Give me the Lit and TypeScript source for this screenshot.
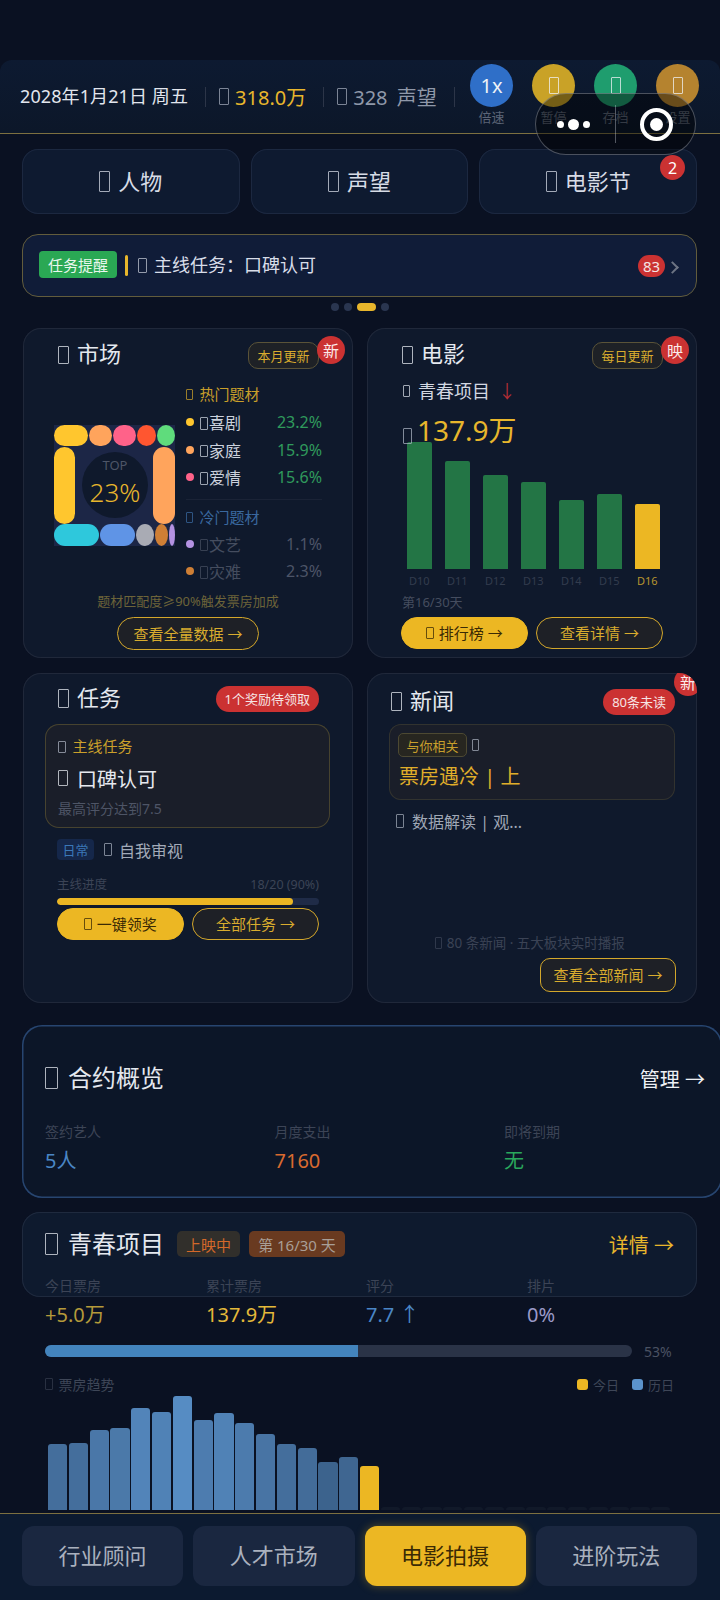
import { LitElement, html, css } from "lit";
import { customElement } from "lit/decorators.js";

const tofu = (cls = "") => html`<span class="t ${cls}"></span>`;

@customElement("app-root")
export class AppRoot extends LitElement {
  static styles = css`
    :host { display: block; width: 720px; height: 1600px; font-family: "Noto Sans", "Noto Sans CJK SC", sans-serif; color: #d8dde8; }
    * { box-sizing: border-box; }
    .root { position: relative; width: 720px; height: 1600px; overflow: hidden; background: #0a1122; display: flex; flex-direction: column; }
    .t { display: inline-block; width: .5em; height: .84em; border: 1.5px solid currentColor; opacity: .75; border-radius: 1px; vertical-align: -.1em; flex: none; }
    .tab, .title, .stxt, .nb, .lh, .lr, .tl1, .date { padding-bottom: .16em; }
    .tab .t, .title .t, .nb .t, .lh .t, .lr .t, .tl1 .t { margin-top: .16em; }
    .header { margin-top: 60px; height: 74px; flex: none; background: linear-gradient(#0d1a31, #0c1729); border-bottom: 1.5px solid #7d7040; display: flex; align-items: center; padding: 0 21px 0 20px; border-radius: 12px 12px 0 0; }
    .date { font-size: 18px; color: #e2e6ee; white-space: nowrap; letter-spacing: .1px; }
    .sep { width: 1px; height: 20px; background: #2c3548; margin: 0 13px 0 17px; flex: none; }
    .money, .rep { font-size: 20px; white-space: nowrap; display: flex; align-items: center; gap: 6px; }
    .money { color: #e8b62c; }
    .money .t, .rep .t { color: #a0a8b8; }
    .rep { color: #8f98a9; word-spacing: 4px; }
    .ctrls { margin-left: auto; display: flex; gap: 19px; align-self: flex-start; flex: none; }
    .ctrl { width: 43px; display: flex; flex-direction: column; align-items: center; font-size: 13px; line-height: 20px; color: #5b6476; white-space: nowrap; }
    .circle { width: 43px; height: 43px; border-radius: 50%; display: flex; align-items: center; justify-content: center; font-size: 20px; color: #f0f2f6; margin-top: 4px; }
    .capsule { position: absolute; left: 535px; top: 93px; width: 161px; height: 62px; border-radius: 31px; background: rgba(0,0,0,.42); border: 1.5px solid rgba(170,175,185,.42); }
    .capsule i { position: absolute; background: #fff; border-radius: 50%; }
    .capsule .d1 { left: 21px; top: 27px; width: 7px; height: 7px; }
    .capsule .d2 { left: 32px; top: 25px; width: 11px; height: 11px; }
    .capsule .d3 { left: 47px; top: 27px; width: 7px; height: 7px; }
    .capsule .div { position: absolute; left: 79px; top: 11px; width: 1px; height: 38px; background: rgba(200,205,215,.4); }
    .capsule .ring { position: absolute; left: 104px; top: 14px; width: 33px; height: 33px; border: 4px solid #fff; border-radius: 50%; display: flex; align-items: center; justify-content: center; }
    .capsule .ring b { width: 13px; height: 13px; background: #fff; border-radius: 50%; }
    .main { flex: 1; overflow: hidden; min-height: 0; }
    .tabs { display: flex; gap: 11px; margin: 15px 23px 0 22px; }
    .tab { position: relative; flex: 1; height: 65px; border-radius: 16px; background: #0e1a30; box-shadow: inset 0 0 0 1px #1c2840; font-size: 22px; display: flex; align-items: center; justify-content: center; gap: 8px; color: #d6dbe5; }
    .tab .t { height: .92em; }
    .tab .num { position: absolute; right: 12px; top: 6px; padding: 0; }
    .dotb { width: 25px; height: 25px; border-radius: 50%; background: #cb3232; color: #fff; font-size: 16px; display: flex; align-items: center; justify-content: center; }
    .strip { margin: 20px 23px 0 22px; height: 63px; border-radius: 16px; border: 1.5px solid #625c3c; background: #101c38; display: flex; align-items: center; padding: 0 14px 0 16px; }
    .green { width: 78px; height: 27px; border-radius: 4px; background: #2aa854; color: #e9f7ee; font-size: 15px; display: flex; align-items: center; justify-content: center; flex: none; margin-bottom: 2px; padding-bottom: 1px; }
    .gbar { width: 3px; height: 21px; background: #e8b62c; border-radius: 2px; margin: 0 10px 0 8px; flex: none; }
    .stxt { font-size: 18px; color: #d8dde8; margin-left: 7px; }
    .strip .t { color: #c0c6d2; font-size: 18px; }
    .count { margin-left: auto; min-width: 27px; height: 22px; border-radius: 11px; background: #cb3232; color: #f4e4e4; font-size: 15px; display: flex; align-items: center; justify-content: center; }
    .chev { width: 9px; height: 9px; margin: 3px 5px 0 3px; border-top: 2px solid #6d7483; border-right: 2px solid #6d7483; transform: rotate(45deg); }
    .pager { display: flex; justify-content: center; align-items: center; gap: 5px; height: 8px; margin-top: 6px; }
    .pager i { width: 8px; height: 8px; border-radius: 4px; background: #2a3650; }
    .pager .on { width: 19px; background: #e8b62c; }
    .grid { display: grid; grid-template-columns: 330px 330px; gap: 15px 14px; margin: 17px 0 0 23px; }
    .card { position: relative; height: 330px; border-radius: 18px; background: #0f192c; box-shadow: inset 0 0 0 1px #20283a; display: flex; flex-direction: column; }
    .head { height: 54px; flex: none; display: flex; align-items: center; justify-content: space-between; padding: 0 34px 0 35px; }
    .title { font-size: 22px; line-height: 30px; color: #e4e8ef; display: flex; align-items: center; gap: 8px; white-space: nowrap; }
    .upd { width: 71px; height: 27px; border-radius: 10px; border: 1px solid #5a5338; background: #1e2126; color: #d9ac2e; font-size: 13px; display: flex; align-items: center; justify-content: center; white-space: nowrap; }
    .corner { position: absolute; width: 28px; height: 28px; border-radius: 50%; background: #cb3232; color: #fbeaea; font-size: 16px; display: flex; align-items: center; justify-content: center; }
    .c1 { left: 294px; top: 8px; }
    .c2 { left: 294px; top: 8px; }
    .c3 { left: 307px; top: -5px; }
    .mbody { display: flex; height: 206px; padding-left: 31px; align-items: flex-start; }
    .tree { width: 121px; height: 121px; margin-top: 43px; background: #1c2646; display: flex; flex-direction: column; justify-content: space-between; position: relative; flex: none; }
    .trow { display: flex; justify-content: space-between; }
    .trow i { display: block; border-radius: 11px; }
    .trow i.oval { border-radius: 50%; }
    .hub { position: absolute; left: 28px; top: 27px; width: 66px; height: 66px; border-radius: 50%; background: #0f192c; display: flex; flex-direction: column; align-items: center; line-height: 1; }
    .hub .a { font-size: 13px; color: #4d5567; margin-top: 7px; }
    .hub .b { font-size: 26px; color: #e8b62c; margin-top: 7px; font-weight: 300; }
    .list { width: 136px; margin: 2px 0 0 11px; flex: none; }
    .lh { height: 26px; font-size: 15px; display: flex; align-items: center; gap: 7px; }
    .lh.hot { color: #c99f2a; height: 22px; margin-bottom: 4px; }
    .lh.cold { color: #3a689f; margin-top: 5px; margin-bottom: 1px; }
    .lh .t { font-size: 13px; }
    .lr { height: 27.5px; font-size: 16px; display: flex; align-items: center; color: #cbd1dc; }
    .lr i { width: 8px; height: 8px; border-radius: 50%; margin-right: 6px; flex: none; }
    .lr .t { margin-right: 1.5px; font-size: 15px; }
    .lr b { margin-left: auto; font-weight: 400; color: #2f9a5c; }
    .lr.dim { color: #454d5f; }
    .lr.dim b { color: #4c5467; }
    .hr { height: 1px; background: #1a2336; margin-top: 6px; }
    .tip { font-size: 13px; height: 18px; line-height: 18px; margin-top: 4px; text-align: center; color: #6d6439; white-space: nowrap; }
    .btn { height: 33px; border-radius: 17px; border: 1.5px solid #d3a72b; background: #1e2026; color: #d9ac2e; font-size: 15px; line-height: 20px; display: flex; align-items: center; justify-content: center; gap: 5px; white-space: nowrap; flex: none; }
    .btn.fill { background: #ecb723; border-color: #ecb723; color: #3a2a05; }
    .mbtn { width: 142px; margin: 7px 0 0 94px; }
    .fsub { font-size: 18px; line-height: 24px; display: flex; align-items: center; height: 24px; margin-top: -3px; padding-left: 36px; color: #d3d8e2; }
    .fsub .t { font-size: 14px; margin-right: 8px; }
    .fsub em { font-style: normal; color: #b32d35; margin-left: 8px; }
    .fval { font-size: 28px; color: #e8b62c; height: 40px; line-height: 40px; margin-top: 7px; padding-left: 36px; display: flex; align-items: center; position: relative; z-index: 1; }
    .fval .t { color: #aab2c0; font-size: 18px; margin: 12px 5px 0 0; }
    .bars { height: 127px; margin-top: -8px; display: flex; gap: 13.3px; padding-left: 40px; align-items: flex-end; }
    .bars i { display: block; width: 24.7px; background: #237545; border-radius: 2px 2px 0 0; }
    .bars i.on { background: #ecb723; }
    .dlab { display: flex; gap: 13.3px; padding-left: 40px; height: 16px; margin-top: 4px; font-size: 11px; color: #333c4e; }
    .dlab span { width: 24.7px; display: flex; justify-content: center; line-height: 16px; }
    .dlab .on { color: #b8952f; }
    .fday { font-size: 13px; color: #454d5f; height: 18px; line-height: 18px; margin-top: 4px; padding-left: 35px; }
    .fbtns { display: flex; gap: 8px; margin: 6px 0 0 34px; }
    .fbtns .btn { height: 32px; width: 127px; }
    .hd2 { height: 51px; padding-right: 34px; }
    .pill { height: 26px; border-radius: 13px; background: #cb3232; color: #f6e4e4; font-size: 13px; display: flex; align-items: center; padding: 0 9px; white-space: nowrap; }
    .tbox { margin-left: 22px; width: 285px; height: 104px; border-radius: 14px; background: #1a1e29; box-shadow: inset 0 0 0 1px #47432f; padding: 11px 0 0 13px; flex: none; }
    .tl1 { height: 24px; font-size: 15px; color: #cba02b; display: flex; align-items: center; gap: 7px; }
    .tl1 .t { color: #a9b0bd; }
    .tl2 { height: 38px; font-size: 20px; color: #e6e9ef; display: flex; align-items: center; gap: 9px; }
    .tl3 { height: 22px; font-size: 14px; color: #4e5566; display: flex; align-items: center; }
    .daily { display: flex; align-items: center; height: 21px; margin: 11px 0 0 34px; font-size: 16px; color: #a2aab8; }
    .dtag { width: 37px; height: 21px; border-radius: 4px; background: #15274a; color: #3b78b8; font-size: 13px; display: flex; align-items: center; justify-content: center; margin-right: 10px; }
    .daily .t { margin-right: 7px; }
    .pl { display: flex; justify-content: space-between; margin: 17px 34px 0 34px; height: 16px; line-height: 16px; font-size: 12.5px; color: #3c4456; }
    .pb { height: 7px; margin: 5px 34px 0 34px; border-radius: 4px; background: #1f2b47; overflow: hidden; }
    .pb i { display: block; height: 100%; background: #ecb723; border-radius: 4px; }
    .tbtns { display: flex; gap: 8px; margin: 3px 34px 0 34px; }
    .tbtns .btn { height: 32px; flex: 1; }
    .news { overflow: hidden; }
    .nhead { height: 51px; padding: 6px 22px 0 24px; }
    .nbox { margin-left: 22px; width: 286px; height: 76px; flex: none; border-radius: 12px; background: #1a1e29; box-shadow: inset 0 0 0 1px #32332f; padding: 9px 0 0 9px; }
    .ntop { display: flex; align-items: center; gap: 5px; height: 24px; }
    .ntag { width: 69px; height: 24px; border-radius: 5px; background: #272620; border: 1px solid #4d4932; color: #c89f2c; font-size: 13px; display: flex; align-items: center; justify-content: center; }
    .ntop .t { font-size: 14px; color: #a4abb8; }
    .nhl { font-size: 20px; color: #e0ae2a; margin-top: 5px; line-height: 30px; padding-left: 1px; white-space: nowrap; }
    .nitem { margin: 10px 0 0 29px; font-size: 16px; color: #a0a8b6; display: flex; align-items: center; gap: 8px; height: 22px; }
    .ntip { margin-top: auto; padding-left: 68px; font-size: 13.5px; height: 18px; line-height: 18px; color: #3b4355; white-space: nowrap; display: flex; align-items: center; gap: 5px; }
    .nbtn { width: 136px; height: 34px; border-radius: 10px; margin: 6px 0 11px 173px; }
    .contract { margin: 22px 0 0 22px; width: 700px; height: 173px; border-radius: 20px; background: #0c1628; box-shadow: inset 0 0 0 1.5px #274570; padding: 32px 17px 0 23px; }
    .chead { display: flex; justify-content: space-between; align-items: center; height: 42px; }
    .ctitle { font-size: 24px; line-height: 32px; color: #e4e8ef; display: flex; align-items: center; gap: 10px; white-space: nowrap; }
    .ctitle .t { width: 13px; height: 22px; }
    .mgr { font-size: 20px; color: #eef0f4; white-space: nowrap; }
    .cstats { display: grid; grid-template-columns: 229.5px 229.5px 1fr; margin-top: 23px; }
    .lbl { font-size: 14px; color: #3c4456; height: 20px; line-height: 20px; white-space: nowrap; }
    .val { font-size: 20px; height: 30px; line-height: 30px; margin-top: 4px; white-space: nowrap; }
    .movie { margin: 14px 0 0 22px; width: 675px; height: 85px; border-radius: 18px; background: #0e1a2e; box-shadow: inset 0 0 0 1px #1f2a3e; padding: 12px 23px 0 23px; }
    .mhead { display: flex; align-items: center; height: 40px; }
    .mtag { height: 26px; border-radius: 5px; font-size: 15px; display: flex; align-items: center; justify-content: center; white-space: nowrap; }
    .mt1 { width: 63px; background: #312f2b; color: #d4682a; margin-left: 13px; }
    .mt2 { width: 96px; background: #693a20; color: #a89f97; margin-left: 9px; }
    .det { margin-left: auto; font-size: 20px; color: #e8b62c; white-space: nowrap; }
    .mstats { display: grid; grid-template-columns: 161px 160px 161px 1fr; margin-top: 12px; }
    .prog { display: flex; align-items: center; gap: 12px; margin-top: 15px; height: 12px; }
    .ptrack { width: 587px; height: 12px; border-radius: 6px; background: #2a3347; overflow: hidden; flex: none; }
    .ptrack i { display: block; height: 100%; background: #4384bd; }
    .pct { font-size: 14px; color: #4a5262; }
    .trend { display: flex; align-items: center; height: 20px; margin-top: 17px; font-size: 14px; color: #3e4657; }
    .trend .t { margin-right: 6px; font-size: 15px; opacity: .6; }
    .leg { margin-left: auto; display: flex; align-items: center; font-size: 13px; }
    .leg i { width: 11px; height: 11px; border-radius: 3px; margin-right: 5px; }
    .leg .y { background: #ecb723; }
    .leg .b { background: #5b93cc; margin-left: 13px; }
    .chart { height: 116px; margin-left: 3px; display: flex; align-items: flex-end; gap: 1.5px; }
    .chart i { display: block; width: 19.3px; flex: none; border-radius: 3px 3px 0 0; background: #5b93cc; }
    .chart i.on { background: #ecb723; }
    .chart i.off { background: #141c2c; opacity: .7; }
    .nav { flex: none; height: 87px; border-top: 1.5px solid #7d7040; background: #0c1a30; display: flex; gap: 10px; padding: 12px 23px 0 22px; }
    .nb { flex: 1; height: 60px; border-radius: 12px; background: #1a2740; color: #aab1be; font-size: 22px; display: flex; align-items: center; justify-content: center; }
    .nb.on { background: #ecb723; color: #3a2a05; box-shadow: 0 0 10px rgba(236,183,35,.35); }
  `;

  render() {
    const top = [[34, "#ffc62e"], [23, "#ffa45c"], [23, "#ff6289"], [19, "#ff5630"], [18, "#5fdc7c"]];
    const bottom = [[45, "#2ec8dc"], [35, "#5f94e6"], [18, "#a9abb4"], [13, "#cf7f35"], [6, "#b492e2"]];
    const dBars = [127, 108, 94, 87, 69, 75, 65];
    const trend = [66, 67, 80, 82, 102, 98, 114, 90, 97, 87, 76, 66, 62, 48, 53, 44];
    const cell = (w: unknown, c: unknown, h: number) => html`<i class=${(w as number) < 20 ? "oval" : ""} style="width:${w}px;height:${h}px;background:${c}"></i>`;
    const ctrlBtn = (bg: string, label: string, inner: unknown) => html`<div class="ctrl"><div class="circle" style="background:${bg}">${inner}</div>${label}</div>`;
    const row = (color: string, name: string, v: string, dim = false) => html`<div class="lr ${dim ? "dim" : ""}"><i style="background:${color}"></i>${tofu()}${name}<b>${v}</b></div>`;
    const stat = (l: string, v: string, c: string) => html`<div><div class="lbl">${l}</div><div class="val" style="color:${c}">${v}</div></div>`;
    return html`<div class="root">
      <div class="header">
        <span class="date">2028年1月21日 周五</span><span class="sep"></span>
        <span class="money">${tofu()}318.0万</span><span class="sep"></span>
        <span class="rep">${tofu()}328 声望</span><span class="sep"></span>
        <div class="ctrls">
          ${ctrlBtn("#2f6fc8", "倍速", "1x")}
          ${ctrlBtn("#c9a227", "暂停", tofu())}
          ${ctrlBtn("#1f9d6e", "存档", tofu())}
          ${ctrlBtn("#b5832f", "设置", tofu())}
        </div>
      </div>
      <div class="main">
        <div class="tabs">
          <div class="tab">${tofu()}人物</div>
          <div class="tab">${tofu()}声望</div>
          <div class="tab">${tofu()}电影节<span class="num dotb">2</span></div>
        </div>
        <div class="strip">
          <span class="green">任务提醒</span><span class="gbar"></span>${tofu()}<span class="stxt">主线任务：口碑认可</span>
          <span class="count">83</span><span class="chev"></span>
        </div>
        <div class="pager"><i></i><i></i><i class="on"></i><i></i></div>
        <div class="grid">
          <section class="card">
            <div class="head"><span class="title">${tofu()}市场</span><span class="upd">本月更新</span></div>
            <span class="corner c1">新</span>
            <div class="mbody">
              <div class="tree">
                <div class="trow">${top.map(([w, c]) => cell(w, c, 21))}</div>
                <div class="trow"><i style="width:21px;height:77px;background:#ffc62e"></i><i style="width:22px;height:77px;background:#ffa45c"></i></div>
                <div class="trow">${bottom.map(([w, c]) => cell(w, c, 22))}</div>
                <div class="hub"><span class="a">TOP</span><span class="b">23%</span></div>
              </div>
              <div class="list">
                <div class="lh hot">${tofu()}热门题材</div>
                ${row("#ffc62e", "喜剧", "23.2%")}
                ${row("#ffa45c", "家庭", "15.9%")}
                ${row("#ff6289", "爱情", "15.6%")}
                <div class="hr"></div>
                <div class="lh cold">${tofu()}冷门题材</div>
                ${row("#b492e2", "文艺", "1.1%", true)}
                ${row("#cf7f35", "灾难", "2.3%", true)}
              </div>
            </div>
            <div class="tip">题材匹配度≥90%触发票房加成</div>
            <div class="btn mbtn">查看全量数据 →</div>
          </section>
          <section class="card">
            <div class="head"><span class="title">${tofu()}电影</span><span class="upd">每日更新</span></div>
            <span class="corner c2">映</span>
            <div class="fsub">${tofu()}青春项目<em>↓</em></div>
            <div class="fval">${tofu()}137.9万</div>
            <div class="bars">${dBars.map((h, i) => html`<i class=${i === 6 ? "on" : ""} style="height:${h}px"></i>`)}</div>
            <div class="dlab">${dBars.map((_, i) => html`<span class=${i === 6 ? "on" : ""}>D${10 + i}</span>`)}</div>
            <div class="fday">第16/30天</div>
            <div class="fbtns"><div class="btn fill">${tofu()}排行榜 →</div><div class="btn">查看详情 →</div></div>
          </section>
          <section class="card">
            <div class="head hd2"><span class="title">${tofu()}任务</span><span class="pill">1个奖励待领取</span></div>
            <div class="tbox">
              <div class="tl1">${tofu()}主线任务</div>
              <div class="tl2">${tofu()}口碑认可</div>
              <div class="tl3">最高评分达到7.5</div>
            </div>
            <div class="daily"><span class="dtag">日常</span>${tofu()}自我审视</div>
            <div class="pl"><span>主线进度</span><span>18/20 (90%)</span></div>
            <div class="pb"><i style="width:90%"></i></div>
            <div class="tbtns"><div class="btn fill">${tofu()}一键领奖</div><div class="btn">全部任务 →</div></div>
          </section>
          <section class="card news">
            <div class="head nhead"><span class="title">${tofu()}新闻</span><span class="pill">80条未读</span></div>
            <span class="corner c3">新</span>
            <div class="nbox">
              <div class="ntop"><span class="ntag">与你相关</span>${tofu()}</div>
              <div class="nhl">票房遇冷 | 上</div>
            </div>
            <div class="nitem">${tofu()}数据解读 | 观...</div>
            <div class="ntip">${tofu()}80 条新闻 · 五大板块实时播报</div>
            <div class="btn nbtn">查看全部新闻 →</div>
          </section>
        </div>
        <section class="contract">
          <div class="chead"><span class="ctitle">${tofu()}合约概览</span><span class="mgr">管理 →</span></div>
          <div class="cstats">
            ${stat("签约艺人", "5人", "#4a86c5")}
            ${stat("月度支出", "7160", "#d96a2f")}
            ${stat("即将到期", "无", "#2aa85c")}
          </div>
        </section>
        <section class="movie">
          <div class="mhead"><span class="ctitle">${tofu()}青春项目</span><span class="mtag mt1">上映中</span><span class="mtag mt2">第 16/30 天</span><span class="det">详情 →</span></div>
          <div class="mstats">
            ${stat("今日票房", "+5.0万", "#b49a3a")}
            ${stat("累计票房", "137.9万", "#e4b93a")}
            ${stat("评分", "7.7 ↑", "#4a86c5")}
            ${stat("排片", "0%", "#9a9ac8")}
          </div>
          <div class="prog"><div class="ptrack"><i style="width:53.3%"></i></div><span class="pct">53%</span></div>
          <div class="trend">${tofu()}票房趋势<span class="leg"><i class="y"></i>今日<i class="b"></i>历日</span></div>
          <div class="chart">
            ${trend.map((h, i) => html`<i class=${i === 15 ? "on" : ""} style="height:${h}px;opacity:${i === 15 ? 1 : (0.4 + (h / 114) * 0.55).toFixed(2)}"></i>`)}
            ${Array.from({ length: 14 }, () => html`<i class="off" style="height:3px"></i>`)}
          </div>
        </section>
      </div>
      <div class="nav">
        <div class="nb">行业顾问</div><div class="nb">人才市场</div><div class="nb on">电影拍摄</div><div class="nb">进阶玩法</div>
      </div>
      <div class="capsule"><i class="d1"></i><i class="d2"></i><i class="d3"></i><span class="div"></span><span class="ring"><b></b></span></div>
    </div>`;
  }
}
